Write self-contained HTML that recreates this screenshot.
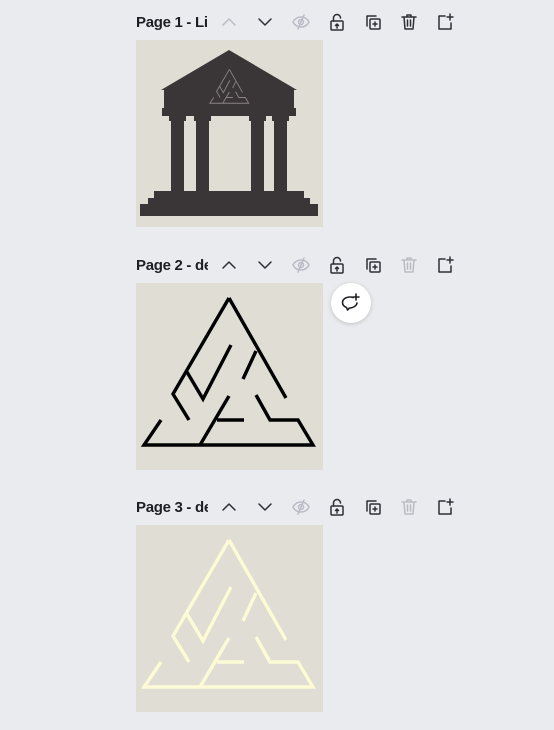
<!DOCTYPE html>
<html><head><style>
body{margin:0;width:554px;height:730px;background:#eaebef;position:relative;overflow:hidden;font-family:"Liberation Sans",sans-serif}
.h{position:absolute;left:136px;width:72px;overflow:hidden;white-space:nowrap;font-size:15px;font-weight:bold;color:#1e1f24;letter-spacing:-0.3px}
.f{position:absolute;left:136px;width:187px;height:187px;background:#e0ddd4}
.ic{position:absolute;width:20px;height:20px}
.ic svg{width:20px;height:20px;fill:none;stroke:#2d2f36;stroke-width:1.5;stroke-linecap:round;stroke-linejoin:round}
.dis svg{stroke:#b9bcc4}
.bub{position:absolute;left:331px;top:283px;width:40px;height:40px;border-radius:50%;background:#fff;box-shadow:0 1px 4px rgba(0,0,0,.18)}
</style></head><body>

<div class="h" style="top:14px">Page 1 - Library</div>
<div class="h" style="top:257px">Page 2 - design</div>
<div class="h" style="top:499px">Page 3 - design</div>

<!-- row 1 y=12 -->
<div class="ic dis" style="left:219px;top:12px"><svg viewBox="0 0 20 20"><path d="M4 13l6-6 6 6"/></svg></div>
<div class="ic" style="left:255px;top:12px"><svg viewBox="0 0 20 20"><path d="M4 7l6 6 6-6"/></svg></div>
<div class="ic dis" style="left:291px;top:12px"><svg viewBox="0 0 20 20"><path d="M2 10c2-4 5-5 8-5s6 1 8 5c-2 4-5 5-8 5s-6-1-8-5z"/><circle cx="10" cy="10" r="2.5"/><path d="M13 3L7 17"/></svg></div>
<div class="ic" style="left:327px;top:12px"><svg viewBox="0 0 20 20"><rect x="4" y="9" width="12" height="9" rx="1"/><path d="M6.5 9V6a3.5 3.5 0 0 1 7 0"/><path d="M10 16v-4M8.5 13.5L10 12l1.5 1.5"/></svg></div>
<div class="ic" style="left:363px;top:12px"><svg viewBox="0 0 20 20"><path d="M13 4H4v10"/><rect x="7" y="7" width="10" height="10" rx="1"/><path d="M12 10v4M10 12h4"/></svg></div>
<div class="ic" style="left:399px;top:12px"><svg viewBox="0 0 20 20"><path d="M3 5h14M8 5V3h4v2M5 5l1 12h8l1-12M8.5 8v6M11.5 8v6"/></svg></div>
<div class="ic" style="left:435px;top:12px"><svg viewBox="0 0 20 20"><path d="M10 4H4v13h12v-6M15 2v6M12 5h6"/></svg></div>

<!-- row 2 y=255 -->
<div class="ic" style="left:219px;top:255px"><svg viewBox="0 0 20 20"><path d="M4 13l6-6 6 6"/></svg></div>
<div class="ic" style="left:255px;top:255px"><svg viewBox="0 0 20 20"><path d="M4 7l6 6 6-6"/></svg></div>
<div class="ic dis" style="left:291px;top:255px"><svg viewBox="0 0 20 20"><path d="M2 10c2-4 5-5 8-5s6 1 8 5c-2 4-5 5-8 5s-6-1-8-5z"/><circle cx="10" cy="10" r="2.5"/><path d="M13 3L7 17"/></svg></div>
<div class="ic" style="left:327px;top:255px"><svg viewBox="0 0 20 20"><rect x="4" y="9" width="12" height="9" rx="1"/><path d="M6.5 9V6a3.5 3.5 0 0 1 7 0"/><path d="M10 16v-4M8.5 13.5L10 12l1.5 1.5"/></svg></div>
<div class="ic" style="left:363px;top:255px"><svg viewBox="0 0 20 20"><path d="M13 4H4v10"/><rect x="7" y="7" width="10" height="10" rx="1"/><path d="M12 10v4M10 12h4"/></svg></div>
<div class="ic dis" style="left:399px;top:255px"><svg viewBox="0 0 20 20"><path d="M3 5h14M8 5V3h4v2M5 5l1 12h8l1-12M8.5 8v6M11.5 8v6"/></svg></div>
<div class="ic" style="left:435px;top:255px"><svg viewBox="0 0 20 20"><path d="M10 4H4v13h12v-6M15 2v6M12 5h6"/></svg></div>

<!-- row 3 y=497 -->
<div class="ic" style="left:219px;top:497px"><svg viewBox="0 0 20 20"><path d="M4 13l6-6 6 6"/></svg></div>
<div class="ic" style="left:255px;top:497px"><svg viewBox="0 0 20 20"><path d="M4 7l6 6 6-6"/></svg></div>
<div class="ic dis" style="left:291px;top:497px"><svg viewBox="0 0 20 20"><path d="M2 10c2-4 5-5 8-5s6 1 8 5c-2 4-5 5-8 5s-6-1-8-5z"/><circle cx="10" cy="10" r="2.5"/><path d="M13 3L7 17"/></svg></div>
<div class="ic" style="left:327px;top:497px"><svg viewBox="0 0 20 20"><rect x="4" y="9" width="12" height="9" rx="1"/><path d="M6.5 9V6a3.5 3.5 0 0 1 7 0"/><path d="M10 16v-4M8.5 13.5L10 12l1.5 1.5"/></svg></div>
<div class="ic" style="left:363px;top:497px"><svg viewBox="0 0 20 20"><path d="M13 4H4v10"/><rect x="7" y="7" width="10" height="10" rx="1"/><path d="M12 10v4M10 12h4"/></svg></div>
<div class="ic dis" style="left:399px;top:497px"><svg viewBox="0 0 20 20"><path d="M3 5h14M8 5V3h4v2M5 5l1 12h8l1-12M8.5 8v6M11.5 8v6"/></svg></div>
<div class="ic" style="left:435px;top:497px"><svg viewBox="0 0 20 20"><path d="M10 4H4v13h12v-6M15 2v6M12 5h6"/></svg></div>

<!-- frame 1 temple -->
<div class="f" style="top:40px"><svg width="187" height="187" viewBox="0 0 187 187">
<g fill="#3a3536">
<polygon points="93,10 161,50 25,50"/>
<rect x="28" y="49" width="130" height="21"/>
<rect x="26" y="68" width="134" height="8"/>
<rect x="33" y="75" width="17" height="6"/><rect x="58" y="75" width="17" height="6"/>
<rect x="113" y="75" width="17" height="6"/><rect x="136" y="75" width="17" height="6"/>
<rect x="35" y="75" width="13" height="78"/><rect x="60" y="75" width="13" height="78"/>
<rect x="115" y="75" width="13" height="78"/><rect x="138" y="75" width="13" height="78"/>
<rect x="18" y="151" width="150" height="8"/>
<rect x="12" y="158" width="162" height="7"/>
<rect x="4" y="164" width="178" height="12"/>
</g>
<g transform="translate(72,26) scale(0.23)" fill="none" stroke="#8a8484" stroke-width="4">
<path d="M93,15 L37,111 L53,137 M51,89 L67,116 L95,62 M93,15 L150,115 M107,96 L120,68 M120,112 L134,137 L162,137 L177,162 L8,162 L25,137 M93,113 L64,162 M81,137 L108,137"/>
</g>
</svg></div>

<!-- frame 2 -->
<div class="f" style="top:283px"><svg width="187" height="187" viewBox="0 0 187 187">
<path fill="none" stroke="#000" stroke-width="3.4" d="M93,15 L37,111 L53,137 M51,89 L67,116 L95,62 M93,15 L150,115 M107,96 L120,68 M120,112 L134,137 L162,137 L177,162 L8,162 L25,137 M93,113 L64,162 M81,137 L108,137"/>
</svg></div>

<!-- frame 3 -->
<div class="f" style="top:525px"><svg width="187" height="187" viewBox="0 0 187 187">
<path fill="none" stroke="#fdfbd6" stroke-width="3.4" d="M93,15 L37,111 L53,137 M51,89 L67,116 L95,62 M93,15 L150,115 M107,96 L120,68 M120,112 L134,137 L162,137 L177,162 L8,162 L25,137 M93,113 L64,162 M81,137 L108,137"/>
</svg></div>

<div class="bub"><svg width="40" height="40" viewBox="0 0 40 40" fill="none" stroke="#1e1f24" stroke-width="1.6" stroke-linecap="round" stroke-linejoin="round">
<path d="M22 14.5c-1-.3-2-.5-3-.5-4.5 0-7.5 2.5-7.5 5.5 0 2.2 1.6 4 4 5l1 2.5 2-2c3.5 0 7-2 7.5-5"/>
<path d="M25 11v6M22 14h6"/></svg></div>
</body></html>
